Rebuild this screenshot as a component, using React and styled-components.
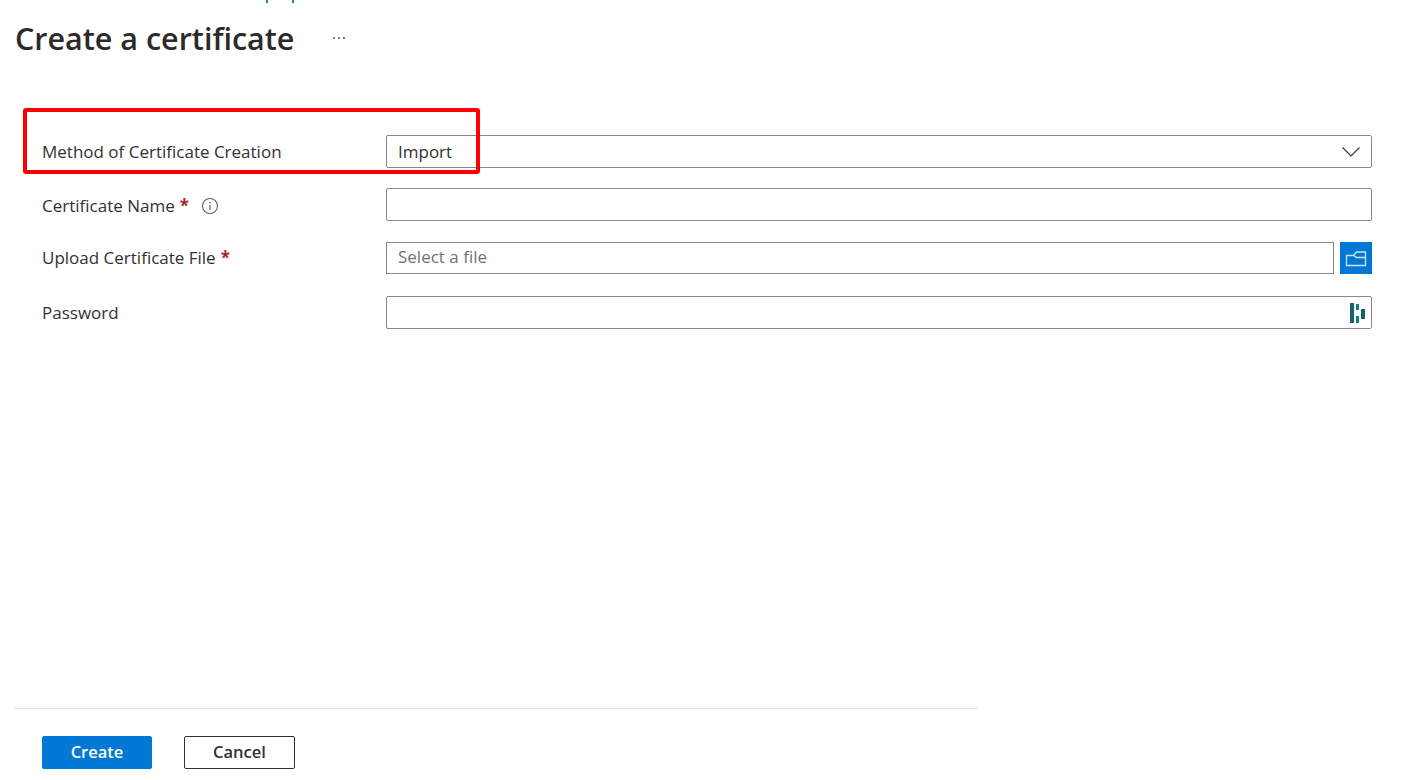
import React from "react";
import styled, { createGlobalStyle } from "styled-components";

const Global = createGlobalStyle`
  html, body { margin: 0; padding: 0; background: #fff; }
  body { font-family: "Open Sans", "Noto Sans", "Liberation Sans", sans-serif; color: #323130; overflow: hidden; }
  * { box-sizing: border-box; }
`;

const Page = styled.div`
  position: relative;
  width: 1402px;
  height: 780px;
  display: flex;
  flex-direction: column;
  padding: 0 30px 11px 15px;
`;

const CrumbStub = styled.div`
  height: 3px;
  display: flex;
  gap: 24px;
  padding-left: 251px;
`;

const CrumbTick = styled.span`
  width: 2px;
  height: 3px;
  background: #1b8ade;
`;

const Header = styled.header`
  display: flex;
  align-items: center;
  height: 70px;
  margin-bottom: 62px;
`;

const Title = styled.h1`
  margin: 0;
  font-size: 30.5px;
  line-height: 70px;
  font-weight: 600;
  color: #2b2a29;
`;

const More = styled.span`
  margin-left: 39px;
  display: flex;
  gap: 3px;
`;

const Dot = styled.i`
  width: 2px;
  height: 2px;
  border-radius: 50%;
  background: #5a5958;
`;

const Form = styled.form`
  padding-left: 27px;
  display: flex;
  flex-direction: column;
`;

const Row = styled.div`
  display: grid;
  grid-template-columns: 344px 1fr;
  align-items: center;
  height: ${(p) => p.$h || 33}px;
  margin-bottom: ${(p) => p.$gap || 0}px;
`;

const Label = styled.label`
  display: flex;
  align-items: center;
  font-size: 17px;
  color: #323130;
  white-space: nowrap;
  padding-top: ${(p) => p.$top || 0}px;
  padding-bottom: ${(p) => p.$bottom || 0}px;
`;

const Star = styled.span`
  color: #a4262c;
  font-weight: 700;
  margin-left: 5px;
`;

const InfoIcon = styled.svg`
  width: 18px;
  height: 18px;
  margin-left: 12px;
`;

const Field = styled.div`
  height: 100%;
  flex: 1;
  display: flex;
  align-items: center;
  justify-content: space-between;
  padding: 0 ${(p) => p.$pad || 6}px ${(p) => (p.$muted ? 3 : 0)}px 11px;
  border: 1px solid #8a8886;
  border-radius: ${(p) => (p.$square ? 0 : 2)}px;
  font-size: 17px;
  color: ${(p) => (p.$muted ? "#737270" : "#323130")};
`;

const FileWrap = styled.div`
  height: 100%;
  display: flex;
  gap: 6px;
`;

const FileButton = styled.button`
  width: 32px;
  height: 100%;
  border: 0;
  padding: 0;
  background: #0078d4;
  display: flex;
  align-items: center;
  justify-content: center;
`;

const Footer = styled.footer`
  margin-top: auto;
  width: 962px;
  border-top: 1px solid #e1dfdd;
  padding: 27px 0 0 27px;
  display: flex;
  gap: 32px;
`;

const Btn = styled.button`
  width: ${(p) => p.$w}px;
  height: 33px;
  border-radius: 2px;
  font-family: inherit;
  font-size: 16.5px;
  line-height: 29px;
  font-weight: 600;
  padding: 0 0 2px;
  background: ${(p) => (p.$primary ? "#0078d4" : "#fff")};
  color: ${(p) => (p.$primary ? "#fff" : "#323130")};
  border: 1px solid ${(p) => (p.$primary ? "#0078d4" : "#323130")};
`;

const Annotation = styled.div`
  position: absolute;
  left: 23px;
  top: 108px;
  width: 457px;
  height: 66px;
  border: 4px solid #fe0000;
  border-radius: 3px;
  pointer-events: none;
`;

export default function App() {
  return (
    <Page>
      <Global />
      <CrumbStub>
        <CrumbTick />
        <CrumbTick />
      </CrumbStub>
      <Header>
        <Title>Create a certificate</Title>
        <More>
          <Dot />
          <Dot />
          <Dot />
        </More>
      </Header>
      <Form>
        <Row $gap={20}>
          <Label>Method of Certificate Creation</Label>
          <Field $pad={11}>
            Import
            <svg width="18" height="10" viewBox="0 0 18 10" fill="none">
              <path d="M.5.5 9 9 17.500.5" stroke="#323130" strokeWidth="1.1" />
            </svg>
          </Field>
        </Row>
        <Row $gap={21}>
          <Label $top={2}>
            Certificate Name<Star>*</Star>
            <InfoIcon viewBox="0 0 18 18" fill="none">
              <circle cx="9" cy="9" r="7.500" stroke="#605e5c" strokeWidth="1.1" />
              <path d="M9 8v5" stroke="#605e5c" strokeWidth="1.2" />
              <circle cx="9" cy="5.600" r=".8" fill="#605e5c" />
            </InfoIcon>
          </Label>
          <Field />
        </Row>
        <Row $h={32} $gap={22}>
          <Label $bottom={2}>
            Upload Certificate File<Star>*</Star>
          </Label>
          <FileWrap>
            <Field $square $muted>
              Select a file
            </Field>
            <FileButton type="button" aria-label="Browse">
              <svg width="22" height="18" viewBox="0 0 22 18" fill="none">
                <path
                  d="M1.500 6.500h7l3-3.500h9v13.500h-19zM8.500 6.500l3 2h9"
                  stroke="#cfe4f7"
                  strokeWidth="1.300"
                />
              </svg>
            </FileButton>
          </FileWrap>
        </Row>
        <Row>
          <Label>Password</Label>
          <Field>
            <span />
            <svg width="15" height="20" viewBox="0 0 15 20" fill="none">
              <path d="M0 0h4v20H0z" fill="#14636f" />
              <path d="M6 1h3v6H6zM6 13h3v7H6z" fill="#1a7a88" />
              <path d="M11 6h4v10h-4z" fill="#14636f" />
            </svg>
          </Field>
        </Row>
      </Form>
      <Footer>
        <Btn $primary $w={110} type="button">
          Create
        </Btn>
        <Btn $w={111} type="button">
          Cancel
        </Btn>
      </Footer>
      <Annotation />
    </Page>
  );
}
